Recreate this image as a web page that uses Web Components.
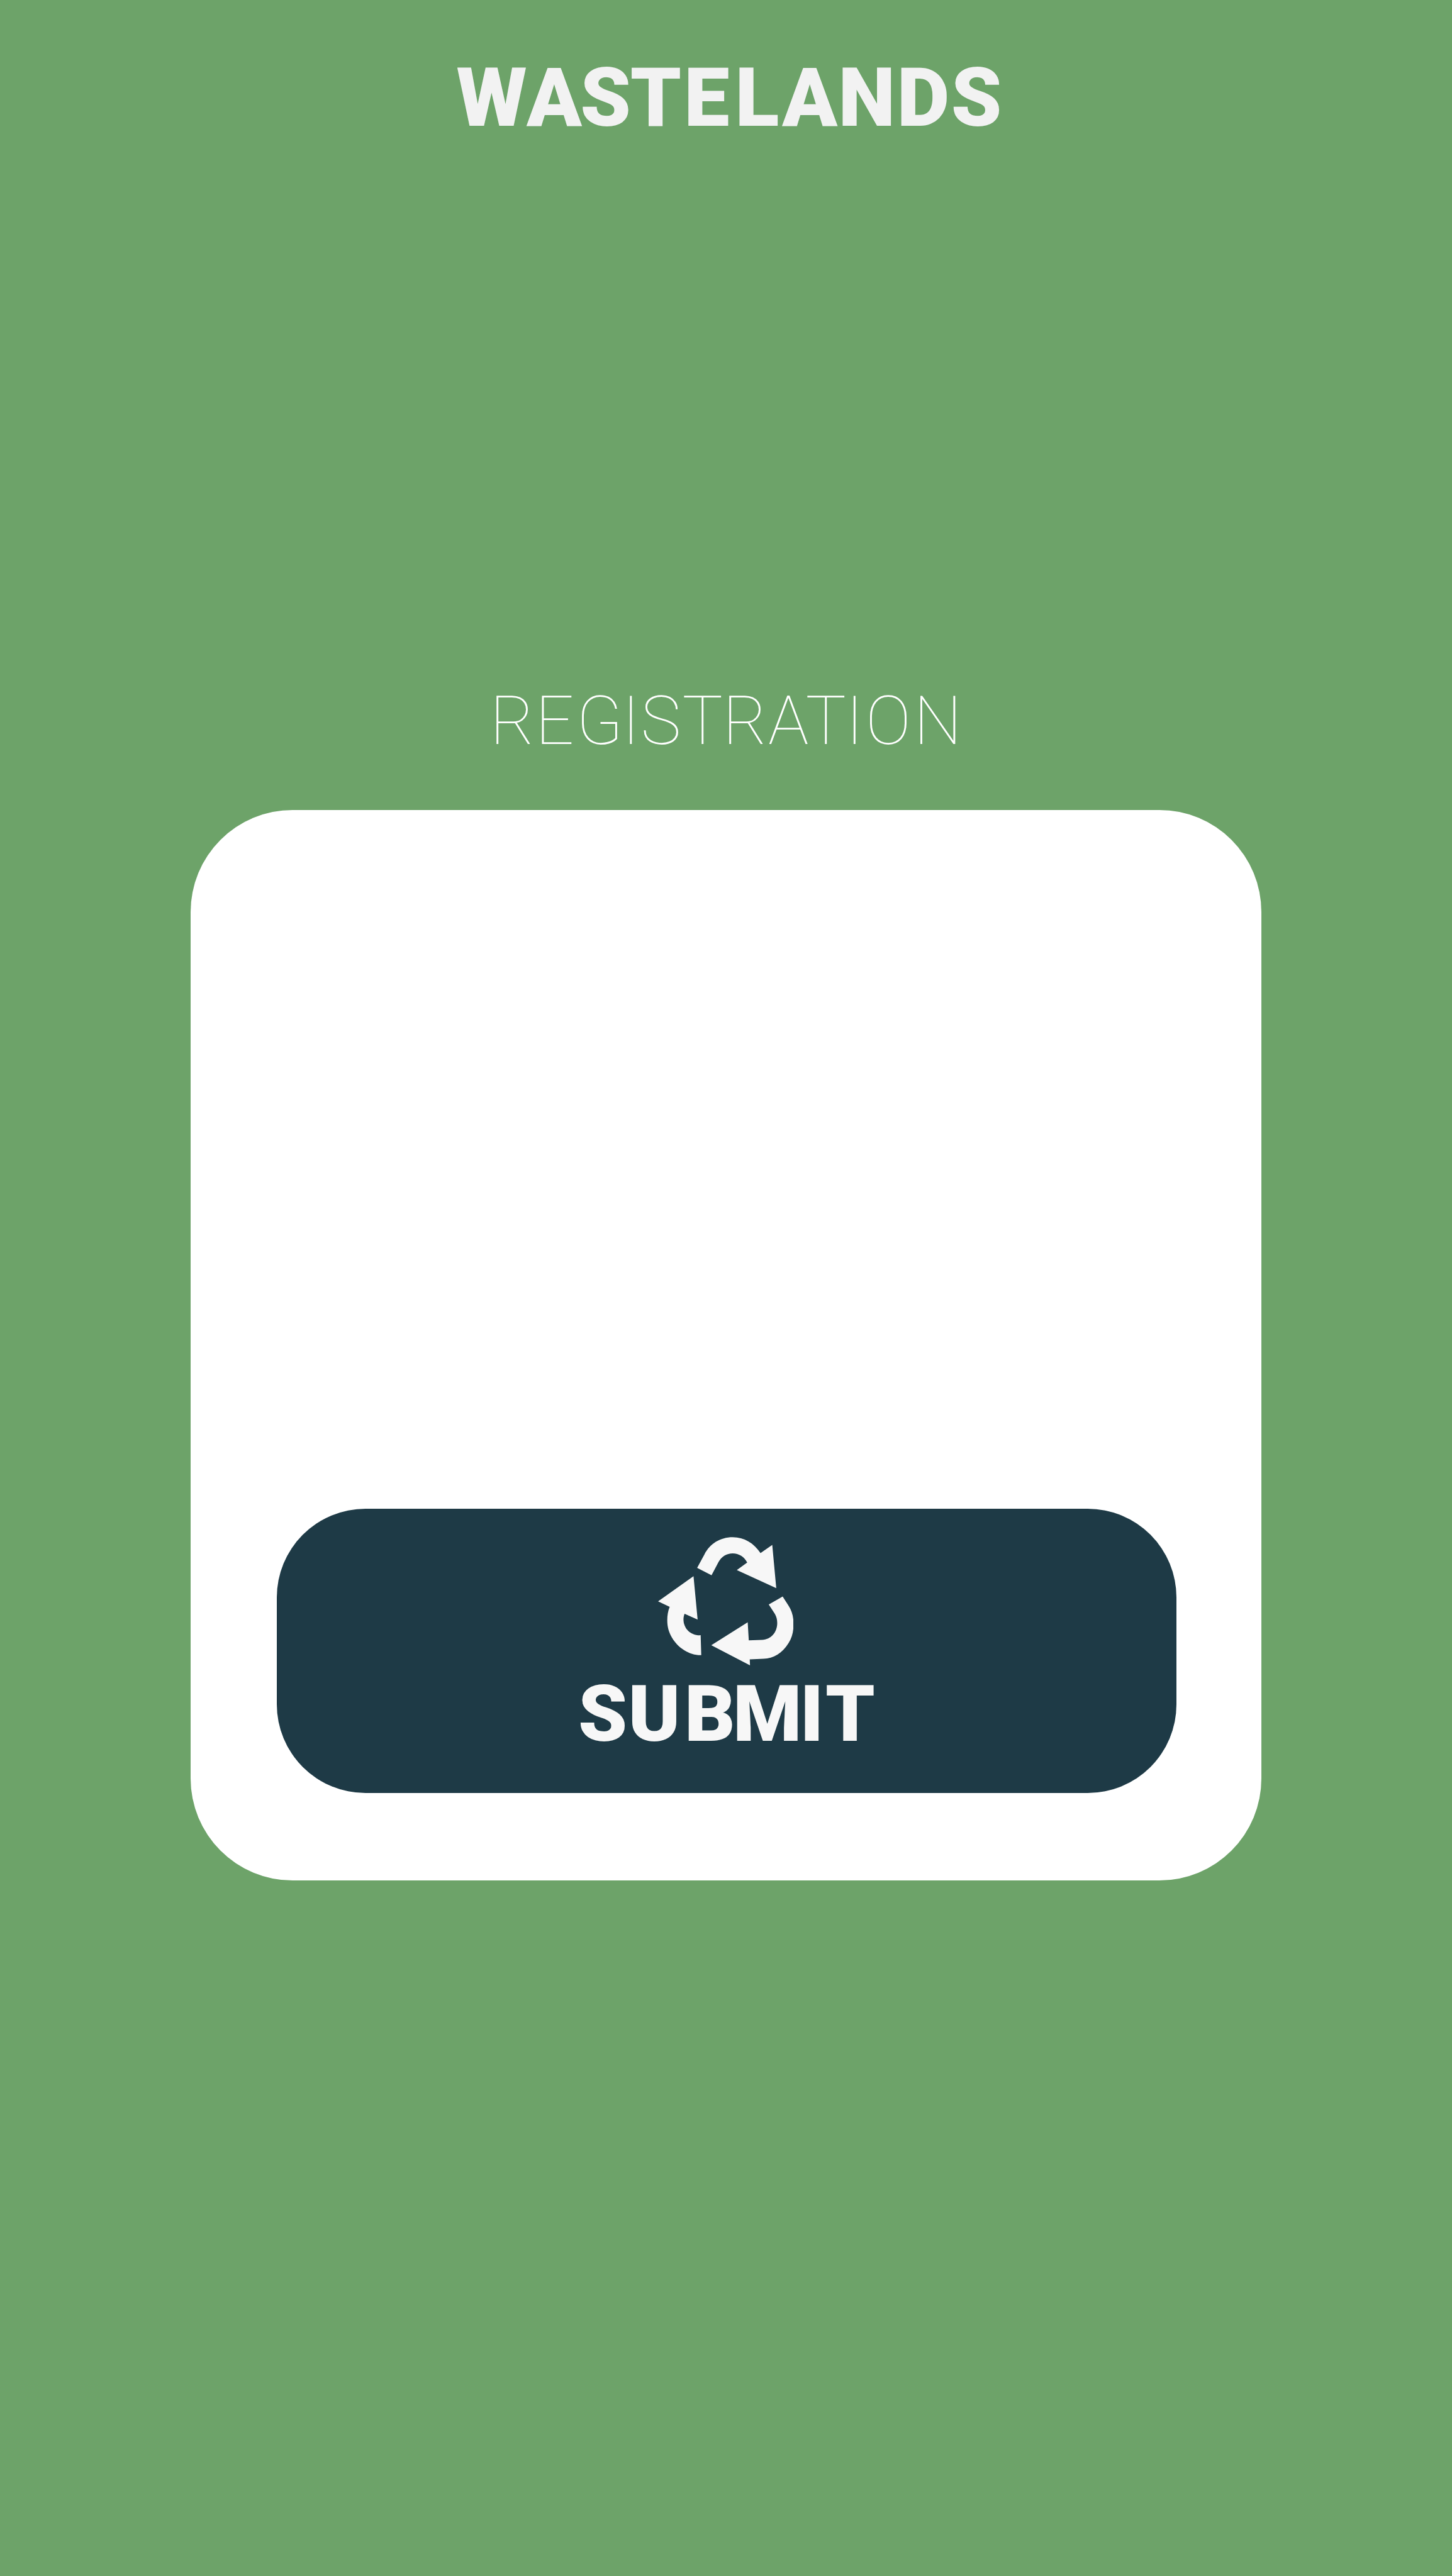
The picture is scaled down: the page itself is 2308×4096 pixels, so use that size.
<!DOCTYPE html>
<html lang="en">
<head>
<meta charset="utf-8">
<title>Wastelands</title>
<style>
  html, body { margin: 0; padding: 0; }
  body { background: #6da369; font-family: Roboto, "Liberation Sans", sans-serif; }
</style>
</head>
<body>
<wl-app></wl-app>

<script>
  const define = (name, html, setup) => {
    const template = document.createElement('template');
    template.innerHTML = html;
    customElements.define(name, class extends HTMLElement {
      connectedCallback() {
        if (this.shadowRoot) return;
        this.attachShadow({ mode: 'open' }).append(template.content.cloneNode(true));
        if (setup) setup(this, this.shadowRoot);
      }
    });
  };

  // One line of lettering; "stops" holds the pen position of each letter.
  define('wl-lettering', `
    <style>
      :host { display: block; }
      svg { display: block; width: 100%; height: 100%; overflow: visible; }
      text { fill: currentColor; font: inherit; }
    </style>
    <svg><text></text></svg>`, (host, root) => {
    const text = root.querySelector('text');
    text.setAttribute('x', host.getAttribute('stops'));
    text.setAttribute('y', host.getAttribute('baseline'));
    text.textContent = host.getAttribute('label');
  });

  define('wl-recycle-icon', `
    <style>
      :host { display: block; width: 215.6px; height: 204.2px; }
      svg { display: block; width: 100%; height: 100%; }
    </style>
    <svg viewBox="97 80 1121 1062" fill="currentColor" aria-hidden="true">
      <path d="M420 335 L480 224 C525 135 610 81 714 81 C808 81 890 130 944 213 L1041 145 L1074 502 L748 353 L834 291 C808 242 766 215 714 215 C664 215 622 242 598 284 L539 396 Z"/>
      <path d="M1127 572 L1176 648 C1204 690 1217 742 1217 797 C1217 860 1206 908 1176 956 C1124 1040 1050 1084 970 1087 L855 1091 L857 1141 L537 975 L838 785 L847 934 L958 930 C1030 927 1083 867 1082 790 C1082 762 1076 737 1062 714 L1012 638 Z"/>
      <path d="M390 404 L424 762 L316 714 C310 730 307 744 307 762 C308 838 368 896 449 892 L454 1057 C360 1060 262 998 212 912 C186 868 173 822 173 769 C173 728 179 691 193 657 L97 612 Z"/>
    </svg>`);

  define('wl-submit', `
    <style>
      :host { display: block; width: 1430.5px; height: 452px; }
      button {
        display: flex; flex-direction: column; align-items: flex-start;
        width: 100%; height: 100%; margin: 0; padding: 45.3px 0 0; border: 0;
        border-radius: 141px; background: #1e3a46; color: #f7f7f7;
      }
      wl-recycle-icon { margin-left: 605.8px; }
      wl-lettering { width: 100%; height: 150px; font: 900 125px Roboto, sans-serif; }
    </style>
    <button type="button">
      <wl-recycle-icon></wl-recycle-icon>
      <wl-lettering label="SUBMIT" baseline="119.6"
        stops="478.9 558.5 647.9 725.1 831.6 872"></wl-lettering>
    </button>`);

  define('wl-card', `
    <style>
      :host {
        display: flex; flex-direction: column; justify-content: flex-end;
        box-sizing: border-box; width: 1702.2px; height: 1701.9px;
        padding: 0 0 139.4px 136.9px; border-radius: 162px; background: #fff;
      }
    </style>
    <slot></slot>`);

  define('wl-app', `
    <style>
      :host { display: flex; flex-direction: column; height: 4096px; overflow: hidden; }
      header { height: 300px; color: #f2f2f2; }
      header wl-lettering { height: 100%; font: 900 129px Roboto, sans-serif; }
      main { display: flex; flex-direction: column; padding-top: 758.4px; }
      .heading { height: 230px; color: #fff; font: 100 107.9px Roboto, sans-serif; }
      wl-card { margin-left: 302.9px; }
    </style>
    <header>
      <wl-lettering label="WASTELANDS" baseline="199.6"
        stops="725.6 836.9 922.3 1001.7 1087.2 1168.5 1243.2 1332.4 1425.7 1511.7"></wl-lettering>
    </header>
    <main>
      <wl-lettering class="heading" label="REGISTRATION" baseline="124.8"
        stops="779 851.1 916.3 988.7 1018.6 1084.4 1149.1 1221.1 1280.4 1344.2 1376.1 1452.4"></wl-lettering>
      <wl-card><wl-submit></wl-submit></wl-card>
    </main>`);
</script>
</body>
</html>
